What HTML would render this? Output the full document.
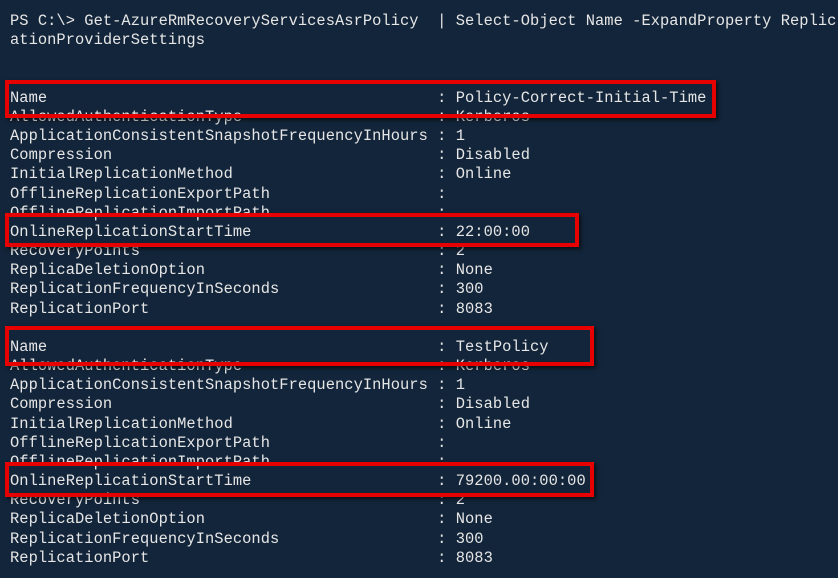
<!DOCTYPE html>
<html><head><style>
html,body{margin:0;padding:0;background:#13253a;width:838px;height:578px;overflow:hidden}
pre{position:absolute;left:10px;top:12px;margin:0;font-family:"Liberation Mono",monospace;font-size:15.4px;letter-spacing:0.05px;line-height:19.17px;color:#e6e6e6}
.b{position:absolute;border:4px solid #e60000;box-shadow:2px 2px 4px rgba(0,0,0,.6);box-sizing:border-box}
</style></head><body>
<pre>PS C:\&gt; Get-AzureRmRecoveryServicesAsrPolicy  | Select-Object Name -ExpandProperty Replic
ationProviderSettings


Name                                          : Policy-Correct-Initial-Time
AllowedAuthenticationType                     : Kerberos
ApplicationConsistentSnapshotFrequencyInHours : 1
Compression                                   : Disabled
InitialReplicationMethod                      : Online
OfflineReplicationExportPath                  :
OfflineReplicationImportPath                  :
OnlineReplicationStartTime                    : 22:00:00
RecoveryPoints                                : 2
ReplicaDeletionOption                         : None
ReplicationFrequencyInSeconds                 : 300
ReplicationPort                               : 8083

Name                                          : TestPolicy
AllowedAuthenticationType                     : Kerberos
ApplicationConsistentSnapshotFrequencyInHours : 1
Compression                                   : Disabled
InitialReplicationMethod                      : Online
OfflineReplicationExportPath                  :
OfflineReplicationImportPath                  :
OnlineReplicationStartTime                    : 79200.00:00:00
RecoveryPoints                                : 2
ReplicaDeletionOption                         : None
ReplicationFrequencyInSeconds                 : 300
ReplicationPort                               : 8083</pre>
<div class="b" style="left:5px;top:80px;width:711px;height:38px"></div>
<div class="b" style="left:5px;top:213px;width:574px;height:34px"></div>
<div class="b" style="left:5px;top:326px;width:589px;height:40px"></div>
<div class="b" style="left:5px;top:462px;width:589px;height:35px"></div>
</body></html>
